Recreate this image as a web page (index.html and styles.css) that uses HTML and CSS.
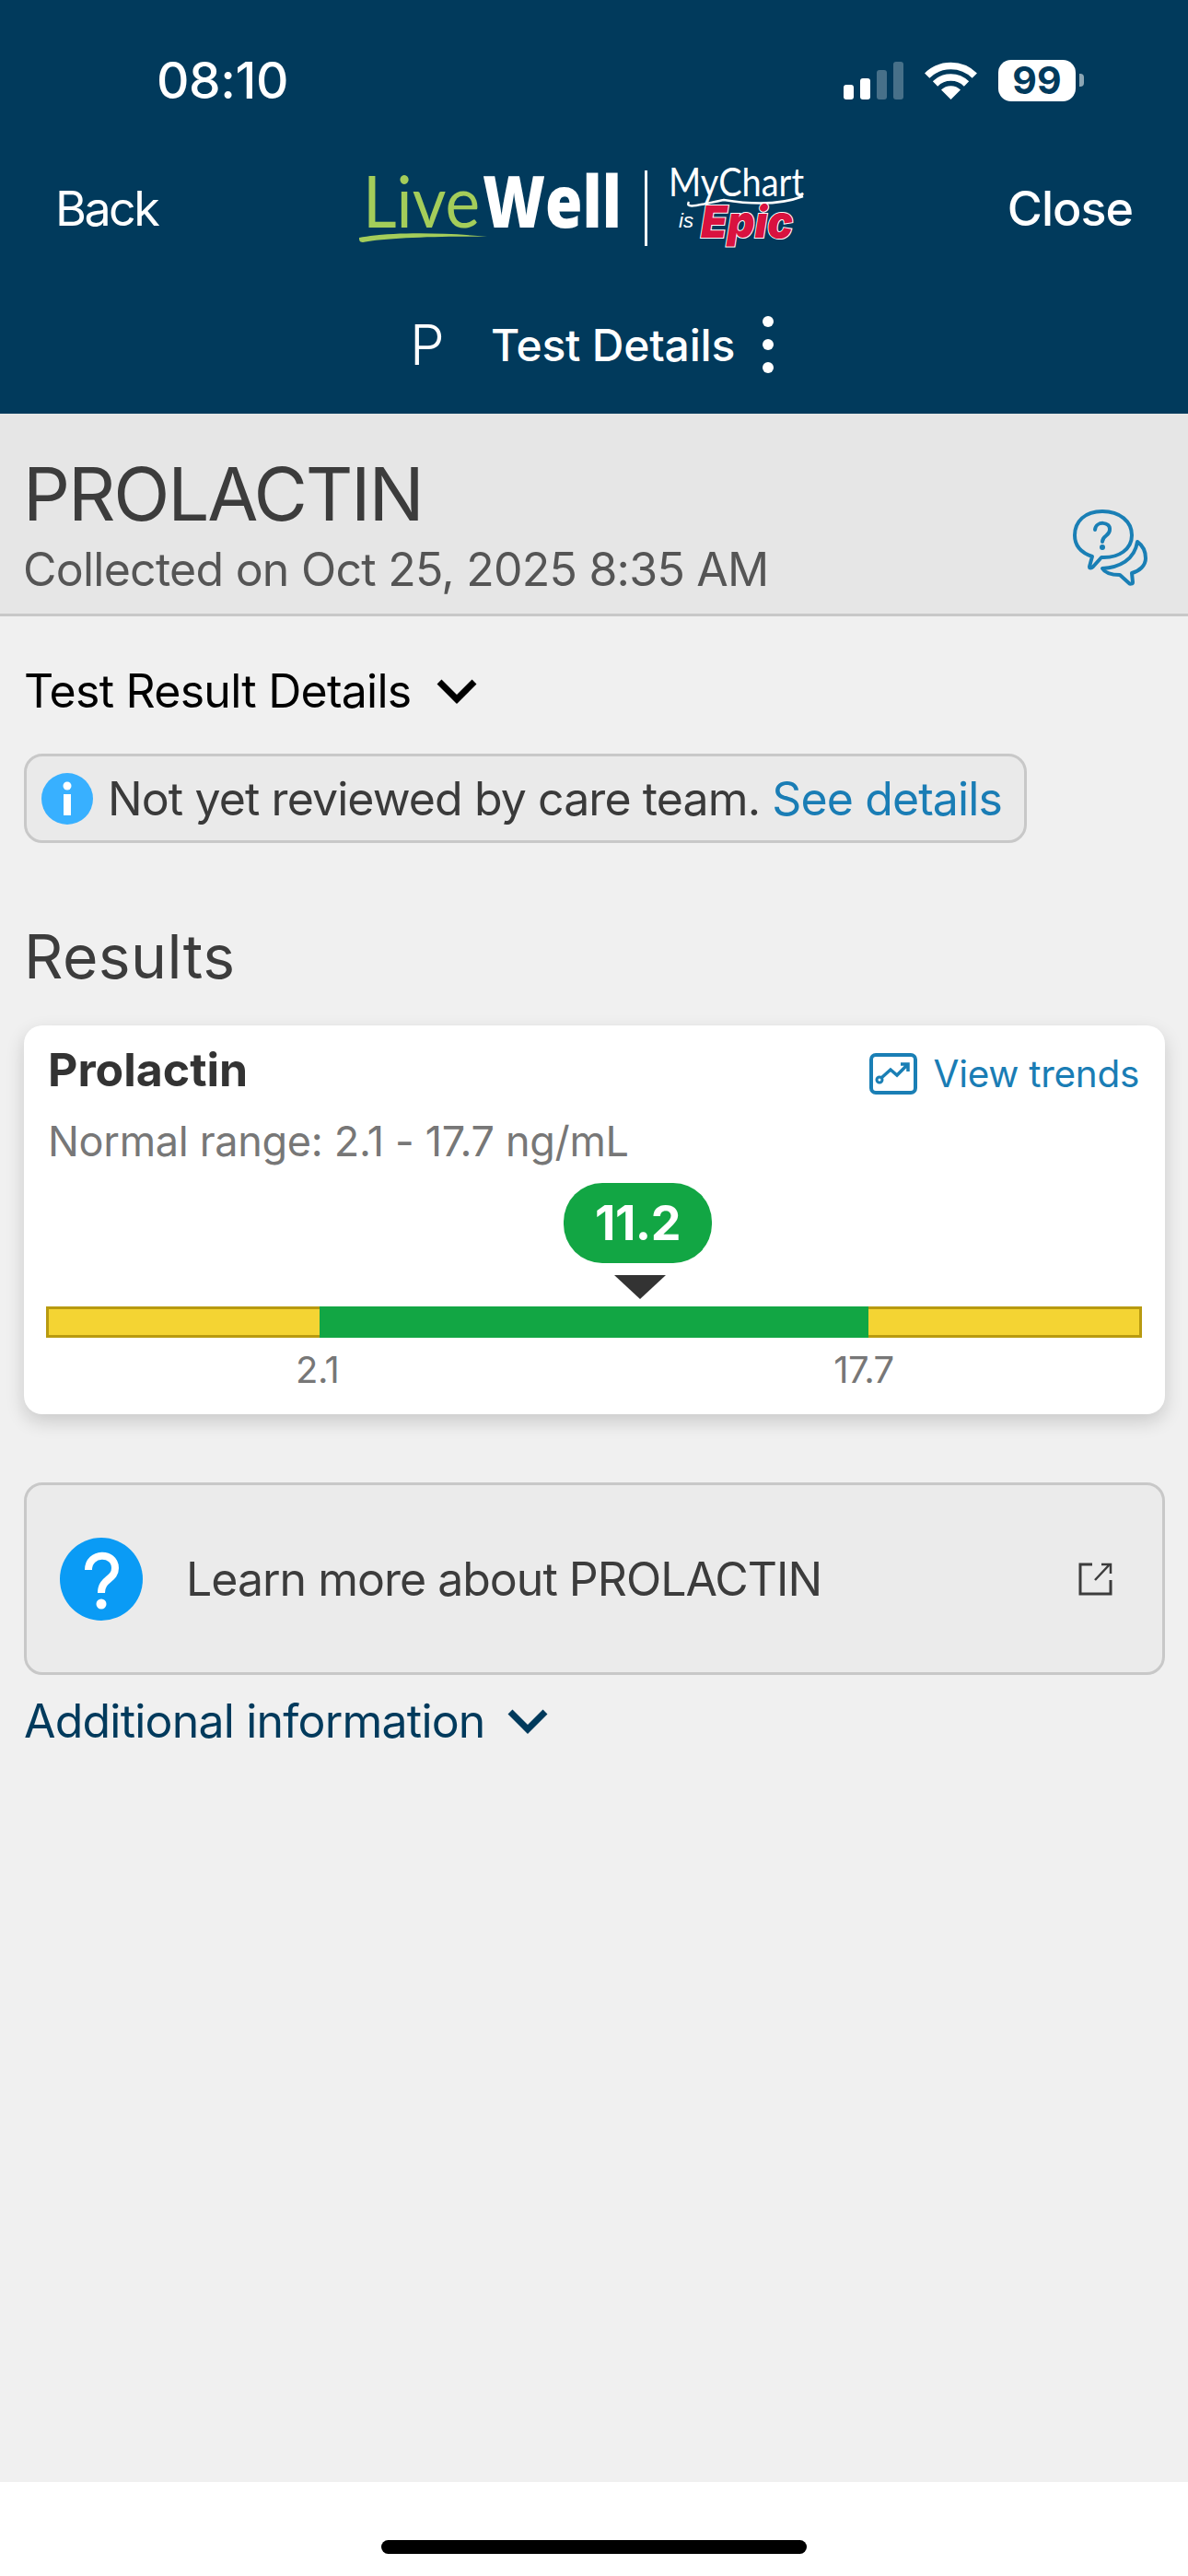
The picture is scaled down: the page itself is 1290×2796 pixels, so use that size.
FILE: index.html
```html
<!DOCTYPE html>
<html lang="en">
<head>
<meta charset="utf-8">
<title>Test Details</title>
<link rel="stylesheet" href="styles.css">
</head>
<body>
<div class="phone">
  <header class="appbar">
    <div class="status">
      <span class="time">08:10</span>
      <div class="status-icons">
        <div class="signal">
          <i class="bar b1"></i><i class="bar b2"></i><i class="bar b3 dim"></i><i class="bar b4 dim"></i>
        </div>
        <svg class="wifi" viewBox="0 0 57 42" width="57" height="42">
          <path d="M2.7 16.2A36.5 36.5 0 0 1 54.3 16.2" fill="none" stroke="#fff" stroke-width="7.5"/>
          <path d="M11.5 25A24 24 0 0 1 45.5 25" fill="none" stroke="#fff" stroke-width="7.5"/>
          <path d="M28.5 42L18 31.5A15 15 0 0 1 39 31.5Z" fill="#fff"/>
        </svg>
        <div class="battery"><span class="battery-level">99</span></div>
        <i class="battery-nub"></i>
      </div>
    </div>
    <nav class="nav">
      <span class="nav-back">Back</span>
      <div class="logo">
        <svg class="logo-livewell" viewBox="0 -25 350 140" width="350" height="140">
          <text class="lw-live" x="4" y="66" textLength="127" lengthAdjust="spacingAndGlyphs">Live</text>
          <text class="lw-well" x="134" y="66" textLength="151" lengthAdjust="spacingAndGlyphs">Well</text>
          <path d="M0 77C30 71 90 71 139 76C90 75 30 77 4 82C0 82 0 79 0 77Z" fill="#a4cd5a"/>
        </svg>
        <i class="logo-divider"></i>
        <svg class="logo-mychart" viewBox="0 -25 200 140" width="200" height="140">
          <text class="mc-name" x="0" y="32" textLength="147" lengthAdjust="spacingAndGlyphs">MyChart</text>
          <path d="M22 38C18 46 30 42 60 36C90 41 120 42 146 32" fill="none" stroke="#fff" stroke-width="2.5"/>
          <text class="mc-is" x="11" y="66" textLength="16" lengthAdjust="spacingAndGlyphs">is</text>
          <text class="mc-epic" x="35" y="77" textLength="100" lengthAdjust="spacingAndGlyphs">Epic</text>
        </svg>
      </div>
      <span class="nav-close">Close</span>
    </nav>
    <div class="subnav">
      <span class="subnav-initial">P</span>
      <span class="subnav-title">Test Details</span>
      <div class="kebab"><i></i><i></i><i></i></div>
    </div>
  </header>

  <section class="band">
    <div class="band-text">
      <h1 class="band-title">PROLACTIN</h1>
      <p class="band-sub">Collected on Oct 25, 2025 8:35 AM</p>
    </div>
    <svg class="band-icon" viewBox="35 23 82 83" width="82" height="83">
      <g fill="none" stroke="#1a7fb5" stroke-width="4" stroke-linejoin="round" stroke-linecap="round">
        <path d="M67 25C48 25 37 36 37 51C37 62 44 70 56 74L53 85C53 87 55 87 57 85L66 75C85 76 99 66 99 51C99 36 86 25 67 25Z"/>
        <path d="M105 58C112 63 114 70 114 76C114 84 107 90 99 92L100 102C100 104 97 104 96 103L86 94C78 94 70 92 67 87C85 86 102 78 105 58Z"/>
        <path d="M59 45C60 35 76 36 75 45C75 52 67 51 67 58"/>
      </g>
      <circle cx="67" cy="64" r="3" fill="#1a7fb5"/>
    </svg>
  </section>

  <main class="content">
    <div class="disclosure disclosure-dark">
      <span>Test Result Details</span>
      <svg class="chevron" viewBox="0 0 46 28" width="46" height="28"><path d="M4 4L23 23L42 4" fill="none" stroke="currentColor" stroke-width="7"/></svg>
    </div>

    <div class="notice">
      <svg class="notice-icon" viewBox="0 0 56 56" width="56" height="56">
        <circle cx="28" cy="28" r="28" fill="#38b0ff"/>
        <circle cx="28" cy="14" r="4.5" fill="#fff"/>
        <rect x="24" y="23" width="8" height="23" fill="#fff"/>
      </svg>
      <span class="notice-text">Not yet reviewed by care team. <span class="link">See details</span></span>
    </div>

    <h2 class="section-title">Results</h2>

    <article class="card">
      <div class="card-head">
        <h3 class="card-title">Prolactin</h3>
        <div class="trends">
          <svg class="trends-icon" viewBox="26 23 52 45" width="52" height="45">
            <rect x="28" y="25" width="48" height="41" rx="5" fill="none" stroke="#1a7fb5" stroke-width="4"/>
            <path d="M39 50L49 41L56 47L67 36M60 35H68V43" fill="none" stroke="#1a7fb5" stroke-width="3.5"/>
            <circle cx="37" cy="52" r="3" fill="none" stroke="#1a7fb5" stroke-width="3"/>
          </svg>
          <span>View trends</span>
        </div>
      </div>
      <p class="card-range">Normal range: 2.1 - 17.7 ng/mL</p>
      <div class="gauge">
        <div class="pill">11.2</div>
        <i class="pointer"></i>
        <div class="track">
          <i class="seg seg-low"></i><i class="seg seg-ok"></i><i class="seg seg-high"></i>
        </div>
        <div class="ticks">
          <span class="tick tick-low">2.1</span>
          <span class="tick tick-high">17.7</span>
        </div>
      </div>
    </article>

    <div class="learn">
      <svg class="learn-icon" viewBox="0 0 90 90" width="90" height="90">
        <circle cx="45" cy="45" r="45" fill="#0a9bf5"/>
        <path d="M31 35C31 15 60 15 60 33C60 46 45 44 45 60" fill="none" stroke="#fff" stroke-width="8"/>
        <circle cx="45" cy="72" r="5.5" fill="#fff"/>
      </svg>
      <span class="learn-text">Learn more about PROLACTIN</span>
      <svg class="learn-ext" viewBox="0 0 37 36" width="37" height="36">
        <path d="M15 2H2V34H35V19" fill="none" stroke="#3c3c3c" stroke-width="3"/>
        <path d="M18 19L33 3M25 2H35V12" fill="none" stroke="#3c3c3c" stroke-width="2.5"/>
      </svg>
    </div>

    <div class="disclosure disclosure-blue">
      <span>Additional information</span>
      <svg class="chevron" viewBox="0 0 46 28" width="46" height="28"><path d="M4 4L23 23L42 4" fill="none" stroke="currentColor" stroke-width="7"/></svg>
    </div>
  </main>

  <footer class="homebar"><i class="home-indicator"></i></footer>
</div>
</body>
</html>
```

FILE: styles.css
```css
* { box-sizing: border-box; }
html, body { margin: 0; padding: 0; }
body { width: 1290px; height: 2796px; overflow: hidden; background: #f0f0f0; font-family: Inter, "Liberation Sans", sans-serif; }
i { display: block; }
h1, h2, h3, p { margin: 0; font-weight: 400; }

.phone { width: 1290px; height: 2796px; display: flex; flex-direction: column; }

.appbar { height: 449px; flex: none; background: #013a5c; color: #fff; display: flex; flex-direction: column; }

.status { height: 54px; margin-top: 60px; padding: 0 113px 0 170px; display: flex; align-items: center; justify-content: space-between; }
.time { font-size: 55px; font-weight: 500; letter-spacing: -.4px; }
.status-icons { display: flex; align-items: center; }
.signal { display: flex; align-items: flex-end; gap: 7px; height: 41px; margin-right: 23px; }
.bar { width: 11px; background: #fff; border-radius: 3px; }
.bar.dim { background: rgba(255,255,255,.28); }
.b1 { height: 16px; } .b2 { height: 23px; } .b3 { height: 32px; } .b4 { height: 41px; }
.wifi { margin-right: 23px; }
.battery { width: 84px; height: 45px; background: #fff; border-radius: 14px; display: flex; align-items: center; justify-content: center; }
.battery-level { color: #013a5c; font-size: 41px; font-weight: 700; }
.battery-nub { width: 5px; height: 14px; margin-left: 4px; background: rgba(255,255,255,.55); border-radius: 0 4px 4px 0; }

.nav { height: 90px; margin-top: 67px; padding: 0 60px 0 60px; display: flex; align-items: center; position: relative; font-size: 52px; }
.nav-back { font-weight: 400; letter-spacing: -2.6px; }
.nav-close { font-weight: 500; letter-spacing: -1px; margin-left: auto; }
.logo { position: absolute; left: 390px; top: 0; display: flex; align-items: center; height: 90px; }
.logo-livewell { display: block; flex: none; margin-right: -60px; }
.logo-divider { width: 3px; height: 82px; background: #fff; margin: 0 0 0 20px; }
.logo-mychart { display: block; flex: none; margin-left: 23px; }
.lw-live { font-family: Lato, sans-serif; font-weight: 400; font-size: 78px; fill: #a4cd5a; }
.lw-well { font-family: "Open Sans", sans-serif; font-weight: 800; font-size: 78px; fill: #fff; }
.mc-name { font-family: Lato, sans-serif; font-weight: 400; font-size: 42px; fill: #fff; }
.mc-is { font-family: "Liberation Sans", sans-serif; font-style: italic; font-size: 22px; fill: #fff; }
.mc-epic { font-family: Inter, "Liberation Sans", sans-serif; font-style: italic; font-weight: 900; font-size: 48px; fill: #d9123f; stroke: #fff; stroke-width: 2px; paint-order: stroke; }

.subnav { height: 60px; margin-top: 73px; padding-left: 445px; display: flex; align-items: center; }
.subnav-initial { font-size: 60px; font-weight: 300; width: 88px; }
.subnav-title { font-size: 48px; font-weight: 500; letter-spacing: -.2px; }
.kebab { margin-left: 30px; display: flex; flex-direction: column; gap: 13px; }
.kebab i { width: 12px; height: 12px; border-radius: 50%; background: #fff; }

.band { height: 220px; flex: none; background: #e6e6e6; border-bottom: 3px solid #c8c8c8; padding: 40px 25px 0 25px; display: flex; justify-content: space-between; }
.band-title { font-size: 80px; line-height: 94px; color: #3c3c3c; letter-spacing: -2.2px; }
.band-sub { font-size: 50px; line-height: 60px; color: #555; letter-spacing: -.75px; margin-top: 5px; }
.band-icon { margin: 64px 18px 0 0; }

.content { flex: 1; padding: 0 25px 0 26px; display: flex; flex-direction: column; align-items: stretch; }

.disclosure { display: flex; align-items: center; font-size: 50px; line-height: 60px; letter-spacing: -.75px; }
.disclosure-dark { color: #000; margin-top: 51px; gap: 27px; }
.disclosure-blue { color: #003a5c; margin-top: 20px; letter-spacing: -.8px; gap: 23px; }
.chevron { display: block; flex: none; }

.notice { align-self: flex-start; width: 1089px; height: 97px; margin-top: 38px; padding-left: 16px; display: flex; align-items: center; gap: 16px; background: #eaeaea; border: 3px solid #c8c8c8; border-radius: 20px; }
.notice-icon { flex: none; }
.notice-text { font-size: 50px; color: #3a3a3a; white-space: nowrap; letter-spacing: -.9px; }
.link { color: #1a7db5; }

.section-title { font-size: 66px; line-height: 80px; color: #3c3c3c; margin-top: 83px; letter-spacing: .4px; }

.card { height: 422px; margin-top: 35px; background: #fff; border-radius: 20px; box-shadow: 0 8px 20px rgba(0,0,0,.16); padding: 18px 25px 0 26px; }
.card-head { display: flex; justify-content: space-between; align-items: flex-start; }
.card-title { font-size: 50px; font-weight: 700; line-height: 60px; color: #333; }
.trends { display: flex; align-items: center; gap: 18px; font-size: 40.5px; letter-spacing: -.3px; color: #1a7db5; margin-top: 10px; margin-right: 3px; }
.trends-icon { display: block; flex: none; }
.card-range { font-size: 45px; line-height: 54px; color: #777; margin-top: 21px; letter-spacing: -.3px; }

.gauge { position: relative; margin-top: 18px; }
.pill { width: 161px; height: 87px; margin-left: 560px; border-radius: 42px; background: #12a644; color: #fff; font-size: 52px; font-weight: 700; letter-spacing: -.5px; display: flex; align-items: center; justify-content: center; }
.pointer { width: 0; height: 0; margin: 13px 0 0 615px; border-left: 28px solid transparent; border-right: 28px solid transparent; border-top: 26px solid #333; }
.track { display: flex; height: 34px; margin: 8px 0 0 -2px; width: 1190px; }
.seg-low { width: 297px; background: #f4d433; border: 3px solid #b89a10; border-right: 0; }
.seg-ok { width: 596px; background: #12a644; }
.seg-high { width: 297px; background: #f4d433; border: 3px solid #b89a10; border-left: 0; }
.ticks { display: flex; margin-top: 10px; font-size: 40px; line-height: 50px; color: #777; letter-spacing: -.5px; }
.tick-low { margin-left: 269px; }
.tick-high { margin-left: 537px; }

.learn { height: 209px; margin-top: 74px; padding: 0 54px 0 36px; display: flex; align-items: center; background: #ebebeb; border: 3px solid #c8c8c8; border-radius: 20px; }
.learn-icon { flex: none; }
.learn-text { font-size: 50px; color: #3c3c3c; margin-left: 47px; letter-spacing: -1px; }
.learn-ext { margin-left: auto; }

.homebar { height: 102px; flex: none; background: #fff; padding-top: 63px; }
.home-indicator { width: 462px; height: 15px; margin: 0 auto; background: #000; border-radius: 8px; }
```
